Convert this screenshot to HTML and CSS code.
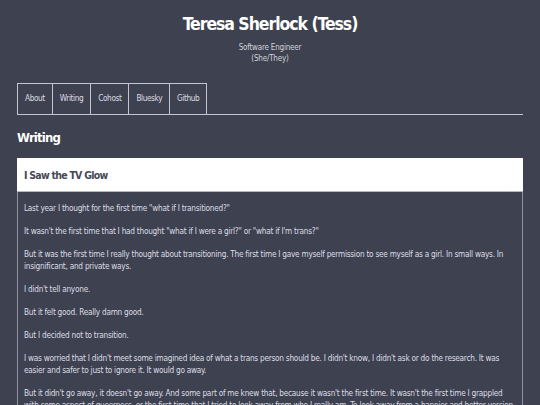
FILE: index.html
```html
<!DOCTYPE html>
<html lang="en">
<head>
<meta charset="utf-8">
<title>Teresa Sherlock (Tess) - Writing</title>
<link rel="stylesheet" href="styles.css">
</head>
<body>
<div class="page">
  <header class="site-header">
    <h1 class="site-title">Teresa Sherlock (Tess)</h1>
    <p class="site-sub">Software Engineer<br>(She/They)</p>
  </header>
  <nav class="nav">
    <a class="nav-item" href="#">About</a>
    <a class="nav-item" href="#">Writing</a>
    <a class="nav-item" href="#">Cohost</a>
    <a class="nav-item" href="#">Bluesky</a>
    <a class="nav-item" href="#">Github</a>
  </nav>
  <h2 class="section-title">Writing</h2>
  <article class="card">
    <h3 class="card-title">I Saw the TV Glow</h3>
    <div class="card-body">
      <p>Last year I thought for the first time "what if I transitioned?"</p>
      <p>It wasn't the first time that I had thought "what if I were a girl?" or "what if I'm trans?"</p>
      <p>But it was the first time I really thought about transitioning. The first time I gave myself permission to see myself as a girl. In small ways. In insignificant, and private ways.</p>
      <p>I didn't tell anyone.</p>
      <p>But it felt good. Really damn good.</p>
      <p>But I decided not to transition.</p>
      <p>I was worried that I didn't meet some imagined idea of what a trans person should be. I didn't know, I didn't ask or do the research. It was easier and safer to just to ignore it. It would go away.</p>
      <p>But it didn't go away, it doesn't go away. And some part of me knew that, because it wasn't the first time. It wasn't the first time I grappled with some aspect of queerness, or the first time that I tried to look away from who I really am. To look away from a happier and better version of myself.</p>
    </div>
  </article>
</div>
</body>
</html>
```

FILE: styles.css
```css
html, body {
  margin: 0;
  padding: 0;
  background: #3e4150;
}

body {
  font-family: "DejaVu Sans Condensed", "DejaVu Sans", sans-serif;
  font-stretch: condensed;
  color: #dcdee4;
}

.page {
  padding: 0 17px;
}

.site-header {
  text-align: center;
  padding-top: 13px;
}

.site-title {
  margin: 0;
  font-size: 17.5px;
  line-height: 23px;
  font-weight: bold;
  letter-spacing: -1.05px;
  color: #ffffff;
}

.site-sub {
  margin: 6px 0 0;
  font-size: 8px;
  line-height: 11px;
  letter-spacing: -0.2px;
  color: #cfd1d8;
}

.nav {
  display: flex;
  margin-top: 19px;
  border-bottom: 1px solid #c3c6d1;
}

.nav-item {
  display: block;
  padding: 9px 7px 10px;
  font-size: 8.2px;
  line-height: 11px;
  letter-spacing: -0.4px;
  color: #dcdee4;
  text-decoration: none;
  border-top: 1px solid #c3c6d1;
  border-left: 1px solid #c3c6d1;
}

.nav-item:last-child {
  border-right: 1px solid #c3c6d1;
}

.section-title {
  margin: 14px 0 11px;
  font-size: 13px;
  line-height: 18px;
  font-weight: bold;
  letter-spacing: -0.8px;
  color: #ffffff;
}

.card {
  display: flex;
  flex-direction: column;
}

.card-title {
  margin: 0;
  padding: 10px 7px 9px;
  font-size: 10.5px;
  line-height: 14px;
  font-weight: bold;
  letter-spacing: -0.75px;
  color: #454856;
  background: #ffffff;
  border-bottom: 1px solid #b6b9c7;
}

.card-body {
  padding: 10px 7px 4px 6px;
  border-left: 1px solid #8e919f;
  border-right: 1px solid #8e919f;
}

.card-body p {
  margin: 0 0 11px;
  font-size: 8.2px;
  line-height: 12px;
  letter-spacing: -0.25px;
}
```
